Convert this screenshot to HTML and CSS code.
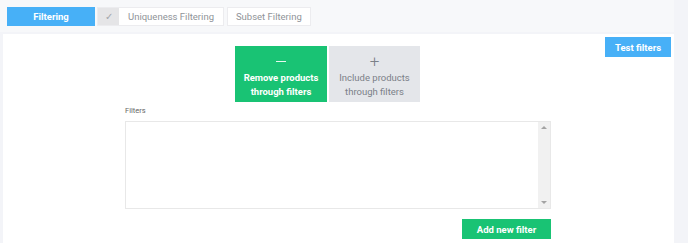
FILE: index.html
```html
<!DOCTYPE html>
<html lang="en">
  <head>
    <meta charset="UTF-8" />
    <title>Filtering</title>
    <link rel="stylesheet" href="styles.css">
  </head>
  <body>
    <div class="page">
      <!-- Step tabs -->
      <div class="tabs-bar">
        <div class="tab active">Filtering</div>
        <div class="tab-group">
          <span class="tab-check">&#10003;</span>
          <span class="tab-label">Uniqueness Filtering</span>
        </div>
        <div class="tab">Subset Filtering</div>
      </div>

      <div class="panel">
        <div class="panel-head">
          <div class="mode-group">
            <div class="mode selected">
              <span class="mode-icon minus"></span>
              <span>Remove products<br />through filters</span>
            </div>
            <div class="mode">
              <span class="mode-icon">+</span>
              <span>Include products<br />through filters</span>
            </div>
          </div>
          <button class="btn btn-blue">Test filters</button>
        </div>

        <div class="filters">
          <label class="filters-label">Filters</label>
          <div class="filters-box">
            <div class="filters-text"></div>
            <div class="scrollbar">
              <span class="arrow up"></span>
              <span class="arrow down"></span>
            </div>
          </div>
          <div class="filters-actions">
            <button class="btn btn-green">Add new filter</button>
          </div>
        </div>
      </div>
    </div>
  </body>
</html>
```

FILE: styles.css
```css
body {
  margin: 0;
  font-family: Roboto, "Liberation Sans", sans-serif;
  background-color: #f3f4f8;
  height: 243px;
  overflow: hidden;
}
.page {
  width: 674px;
  height: 243px;
  display: flex;
  flex-direction: column;
}
.tabs-bar {
  height: 32px;
  box-sizing: border-box;
  padding: 7px 7px 0;
  background-color: #f7f8fa;
  display: flex;
  align-items: flex-start;
  gap: 2px;
}
.tab {
  height: 19px;
  line-height: 17px;
  padding: 0 8px;
  background-color: #fff;
  border: 1px solid #ececef;
  box-sizing: border-box;
  font-size: 9.5px;
  color: #8f9398;
}
.tab.active {
  width: 88px;
  text-align: center;
  background-color: #47b0f7;
  border-color: #47b0f7;
  color: #fff;
  font-weight: 700;
}
.tab-group {
  display: flex;
  height: 19px;
  border: 1px solid #ececef;
  box-sizing: border-box;
  background-color: #fff;
  margin-right: 1px;
}
.tab-check {
  width: 21px;
  background-color: #e5e5e7;
  color: #a3a6ab;
  font-size: 10px;
  text-align: center;
  line-height: 17px;
}
.tab-label {
  padding: 0 9px;
  line-height: 17px;
  font-size: 9.5px;
  color: #8f9398;
}
.panel {
  flex: 1;
  margin: 2px 0 0 3px;
  background-color: #fff;
  display: flex;
  flex-direction: column;
}
.panel-head {
  display: flex;
  align-items: flex-start;
}
.mode-group {
  display: flex;
  gap: 2px;
  margin: 12px 0 0 232px;
}
.mode {
  width: 91px;
  height: 56px;
  background-color: #e4e6ea;
  color: #7b8088;
  font-size: 9.5px;
  line-height: 14px;
  text-align: center;
  display: flex;
  flex-direction: column;
  align-items: center;
  padding-top: 6px;
  box-sizing: border-box;
}
.mode.selected {
  width: 92px;
  background-color: #19c374;
  color: #fff;
  font-weight: 700;
}
.mode-icon {
  font-size: 17px;
  line-height: 18px;
  font-weight: 300;
  margin-bottom: 1px;
}
.mode-icon.minus {
  width: 10px;
  height: 1px;
  background-color: #e8f8ef;
  margin: 9px 0 9px;
}
.btn {
  border: none;
  font-family: inherit;
  font-size: 9.5px;
  font-weight: 700;
  color: #fff;
  height: 20px;
  padding: 0;
}
.btn-blue {
  margin: 3px 3px 0 auto;
  width: 66px;
  background-color: #47b0f7;
}
.btn-green {
  width: 89px;
  background-color: #19c374;
}
.filters {
  width: 426px;
  margin: 3px 0 0 122px;
}
.filters-label {
  display: block;
  font-size: 7.5px;
  color: #666;
  line-height: 12px;
  margin-bottom: 4px;
}
.filters-box {
  height: 88px;
  border: 1px solid #e8e8e8;
  box-sizing: border-box;
  display: flex;
}
.filters-text {
  flex: 1;
}
.scrollbar {
  width: 12px;
  background-color: #f1f1f1;
  display: flex;
  flex-direction: column;
  justify-content: space-between;
  align-items: center;
  padding: 4px 0;
}
.arrow {
  width: 0;
  height: 0;
  border-left: 3px solid transparent;
  border-right: 3px solid transparent;
}
.arrow.up {
  border-bottom: 3px solid #a3a3a3;
}
.arrow.down {
  border-top: 3px solid #a3a3a3;
}
.filters-actions {
  display: flex;
  justify-content: flex-end;
  margin-top: 10px;
}
```
